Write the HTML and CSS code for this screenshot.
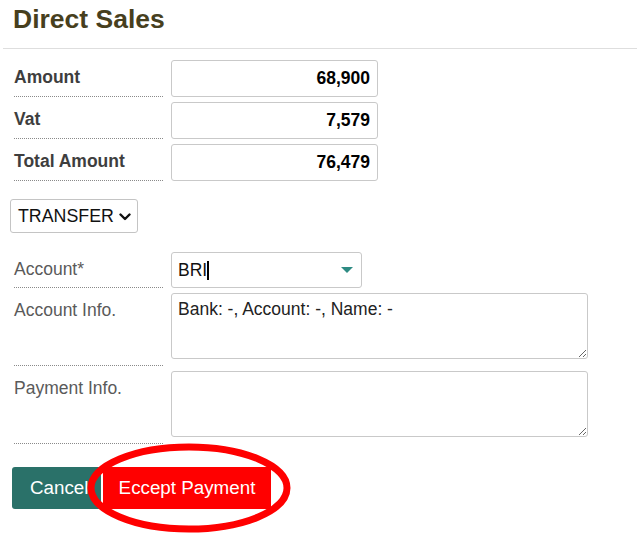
FILE: index.html
```html
<!DOCTYPE html>
<html>
<head>
<meta charset="utf-8">
<link rel="stylesheet" href="styles.css">
</head>
<body>
<div class="page">
  <h1 class="title">Direct Sales</h1>
  <hr class="rule">
  <div class="amounts">
    <div class="label bold">Amount</div>
    <input class="num" type="text" value="68,900" readonly>
    <div class="label bold">Vat</div>
    <input class="num" type="text" value="7,579" readonly>
    <div class="label bold">Total Amount</div>
    <input class="num" type="text" value="76,479" readonly>
  </div>
  <div class="method">
    <div class="select">
      <span>TRANSFER</span>
      <svg class="chev" width="12" height="8" viewBox="0 0 12 8"><path d="M1.5 1.5 L6 6 L10.5 1.5" fill="none" stroke="#111" stroke-width="2.4" stroke-linecap="round" stroke-linejoin="round"/></svg>
    </div>
  </div>
  <div class="details">
    <div class="label">Account*</div>
    <div class="combo">
      <span class="combo-text">BRI</span><span class="caret"></span>
      <svg class="tri" width="12" height="6" viewBox="0 0 12 6"><path d="M0 0 H12 L6 6 Z" fill="#2e8b83"/></svg>
    </div>
    <div class="label">Account Info.</div>
    <textarea class="area" readonly>Bank: -, Account: -, Name: -</textarea>
    <div class="label">Payment Info.</div>
    <textarea class="area" readonly></textarea>
  </div>
  <div class="actions">
    <button class="btn cancel">Cancel</button>
    <button class="btn accept">Eccept Payment</button>
    <svg class="mark" width="212" height="98" viewBox="0 0 212 98"><ellipse cx="106" cy="49" rx="98" ry="41" fill="none" stroke="#ff0000" stroke-width="7"/></svg>
  </div>
</div>
</body>
</html>
```
FILE: styles.css
```css
* { box-sizing: border-box; }
html, body {
  min-height: 535px;
}
body {
  margin: 0;
  background: #fff;
  font-family: "Liberation Sans", Arial, sans-serif;
}
.page {
  padding-left: 3px;
  padding-bottom: 30px;
  position: relative;
}
.title {
  margin: 4px 0 14px 10px;
  font-size: 26.5px;
  font-weight: bold;
  color: #473f1e;
  line-height: 30px;
}
.rule {
  margin: 0;
  border: 0;
  border-top: 1px solid #dedede;
}
.amounts {
  display: grid;
  grid-template-columns: 149px 207px;
  column-gap: 8px;
  row-gap: 5px;
  margin-top: 11px;
  padding-left: 11px;
}
.label {
  border-bottom: 1px dotted #8a8a8a;
  padding-top: 7px;
  font-size: 17.5px;
  color: #5a5a5a;
}
.label.bold {
  font-weight: bold;
  color: #3e3e3e;
}
.num {
  height: 37px;
  border: 1px solid #c9c9c9;
  border-radius: 3px;
  padding: 0 7px 0 7px;
  text-align: right;
  font-family: "Liberation Sans", Arial, sans-serif;
  font-weight: bold;
  font-size: 17.5px;
  color: #000;
  outline: none;
}
.method {
  margin-top: 18px;
  padding-left: 7px;
}
.select {
  width: 128px;
  height: 34px;
  border: 1px solid #c4c4c4;
  border-radius: 3px;
  display: flex;
  align-items: center;
  padding-left: 7px;
  font-size: 17.8px;
  color: #111;
}
.chev { margin-left: 5px; margin-top: 1px; }
.details {
  display: grid;
  grid-template-columns: 149px 417px;
  column-gap: 8px;
  row-gap: 5px;
  margin-top: 19px;
  padding-left: 11px;
}
.combo {
  width: 191px;
  height: 36px;
  border: 1px solid #c9c9c9;
  border-radius: 3px;
  display: flex;
  align-items: center;
  padding-left: 6px;
  font-size: 17.5px;
  color: #111;
}
.caret {
  display: inline-block;
  width: 2px;
  height: 19px;
  background: #000;
}
.tri { margin-left: auto; margin-right: 8px; }
.area {
  display: block;
  height: 66px;
  margin-bottom: 7px;
  border: 1px solid #c9c9c9;
  border-radius: 3px;
  padding: 5px 6px;
  font-family: "Liberation Sans", Arial, sans-serif;
  font-size: 17.5px;
  color: #222;
  outline: none;
  resize: both;
}
.actions {
  display: flex;
  gap: 2px;
  margin-top: 23px;
  padding-left: 9px;
  position: relative;
}
.btn {
  height: 42px;
  border: 0;
  border-radius: 3px;
  font-family: "Liberation Sans", Arial, sans-serif;
  font-size: 18.8px;
  color: #fff;
  padding: 0;
}
.cancel {
  width: 89px;
  background: #2a7169;
  padding-left: 18px;
  text-align: left;
  white-space: nowrap;
  overflow: hidden;
}
.accept {
  width: 168px;
  background: #ff0000;
  border-radius: 0;
}
.mark {
  position: absolute;
  left: 80px;
  top: -28px;
}
```
